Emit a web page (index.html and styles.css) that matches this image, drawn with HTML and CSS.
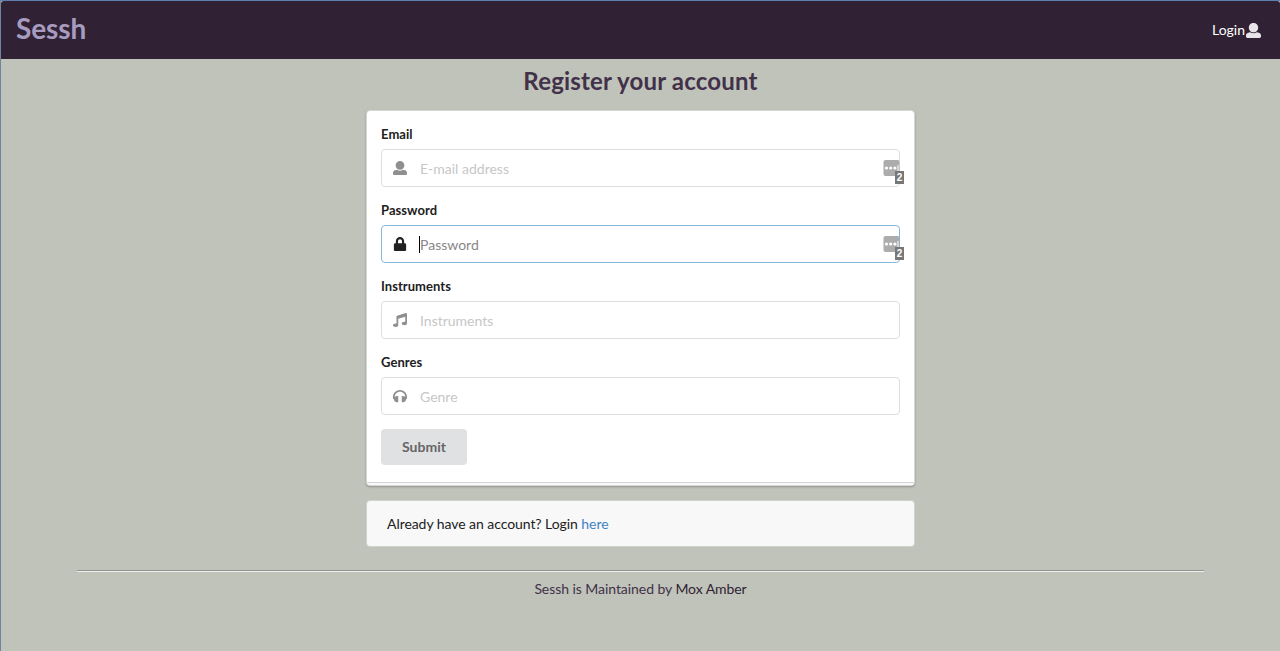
FILE: index.html
```html
<!DOCTYPE html>
<html lang="en">
<head>
<meta charset="utf-8">
<title>Sessh</title>
<link rel="stylesheet" href="styles.css">
</head>
<body>
<svg width="0" height="0" class="sprite">
  <symbol id="user" viewBox="0 0 512 512"><path d="M256 0c88.366 0 160 71.634 160 160s-71.634 160-160 160S96 248.366 96 160 167.634 0 256 0zm183.283 333.821l-71.313-17.828c-74.923 53.89-165.738 41.864-223.94 0l-71.313 17.828C29.981 344.505 0 382.903 0 426.955V464c0 26.51 21.49 48 48 48h416c26.51 0 48-21.49 48-48v-37.045c0-44.052-29.981-82.45-72.717-93.134z"/></symbol>
  <symbol id="lock" viewBox="0 0 448 512"><path d="M400 224h-24v-72C376 68.2 307.8 0 224 0S72 68.2 72 152v72H48c-26.5 0-48 21.5-48 48v192c0 26.5 21.5 48 48 48h352c26.5 0 48-21.5 48-48V272c0-26.5-21.5-48-48-48zm-104 0H152v-72c0-39.7 32.3-72 72-72s72 32.3 72 72v72z"/></symbol>
  <symbol id="music" viewBox="0 0 512 512"><path d="M511.99 32.01c0-21.71-21.1-37.01-41.6-30.51L150.4 96c-13.3 4.2-22.4 16.5-22.4 30.5v261.42c-10.05-2.38-20.72-3.92-32-3.92-53.02 0-96 28.65-96 64s42.98 64 96 64 96-28.65 96-64V214.31l256-75.02v184.63c-10.05-2.38-20.72-3.92-32-3.92-53.02 0-96 28.65-96 64s42.98 64 96 64 96-28.65 96-64l-.01-351.99z"/></symbol>
  <symbol id="headphones" viewBox="0 0 512 512"><path d="M256 32C114.52 32 0 146.497 0 288v48a32 32 0 0 0 17.689 28.622l14.383 7.191C34.083 431.903 83.421 480 144 480h24c13.255 0 24-10.745 24-24V280c0-13.255-10.745-24-24-24h-24c-31.342 0-59.671 12.879-80 33.627V288c0-105.869 86.131-192 192-192s192 86.131 192 192v1.627C427.671 268.879 399.342 256 368 256h-24c-13.255 0-24 10.745-24 24v176c0 13.255 10.745 24 24 24h24c60.579 0 109.917-48.098 111.928-108.187l14.382-7.191A32 32 0 0 0 512 336v-48c0-141.479-114.496-256-256-256z"/></symbol>
  <symbol id="manager" viewBox="0 0 16 16"><rect width="16" height="16" rx="2" fill="#acacac"/><g fill="#fff"><circle cx="3" cy="8" r="1.6"/><circle cx="7.2" cy="8" r="1.6"/><circle cx="11.4" cy="8" r="1.6"/><path d="M14 5h1v6h-1z"/></g></symbol>
</svg>
<header class="topbar">
  <a class="brand">Sessh</a>
  <a class="login">Login<svg class="icon"><use href="#user"/></svg></a>
</header>
<main class="page">
  <h2 class="title">Register your account</h2>
  <form class="card">
    <div class="field">
      <label class="label">Email</label>
      <div class="input"><svg class="icon"><use href="#user"/></svg><span class="hint">E-mail address</span>
        <span class="manager"><svg class="manager-icon"><use href="#manager"/></svg><b class="count">2</b></span></div>
    </div>
    <div class="field">
      <label class="label">Password</label>
      <div class="input focused"><svg class="icon"><use href="#lock"/></svg><i class="caret"></i><span class="hint">Password</span>
        <span class="manager"><svg class="manager-icon"><use href="#manager"/></svg><b class="count">2</b></span></div>
    </div>
    <div class="field">
      <label class="label">Instruments</label>
      <div class="input"><svg class="icon"><use href="#music"/></svg><span class="hint">Instruments</span></div>
    </div>
    <div class="field">
      <label class="label">Genres</label>
      <div class="input"><svg class="icon"><use href="#headphones"/></svg><span class="hint">Genre</span></div>
    </div>
    <button class="submit" type="button">Submit</button>
    <div class="stack"></div>
  </form>
  <div class="message">Already have an account? Login <a class="link">here</a></div>
</main>
<footer class="footer">Sessh is Maintained by <a class="author">Mox Amber</a></footer>
</body>
</html>
```

FILE: styles.css
```css
* { box-sizing: border-box; }
body {
  margin: 0;
  height: 651px;
  overflow: hidden;
  background: #c0c3b9;
  border-top: 1px solid #5f7fae;
  border-left: 1px solid #71859f;
  font: 14px/20px Lato, "Liberation Sans", sans-serif;
  color: #212121;
}
.sprite { position: absolute; }
.icon { width: 14px; height: 14px; fill: currentColor; flex: none; }
.topbar {
  height: 58px;
  padding: 0 19px 0 15px;
  display: flex;
  justify-content: space-between;
  align-items: center;
  background: #302234;
  border-radius: 3px 3px 0 0;
}
.brand { font-size: 28px; line-height: 36px; font-weight: 700; color: #a79cc0; padding-bottom: 5px; letter-spacing: -.1px; }
.login { display: flex; align-items: center; color: #fff; }
.login .icon { width: 15px; height: 15px; margin-left: 1px; color: #e8e4ea; }
.page { width: 549px; margin: 0 auto; }
.title { margin: 0; padding-top: 6px; height: 51px; font-size: 24px; line-height: 31px; font-weight: 700; letter-spacing: .18px; text-align: center; color: #42314a; }
.card {
  display: flex;
  flex-direction: column;
  height: 376px;
  padding: 14px 14px 0;
  background: #fff;
  border: 1px solid #d6d8d4;
  border-radius: 4px;
  box-shadow: 0 1px 2px rgba(34, 36, 38, .3);
}
.field { height: 76px; }
.label { display: block; height: 24px; line-height: 19px; font-size: 13px; font-weight: 700; letter-spacing: .05px; }
.input {
  display: flex;
  align-items: center;
  position: relative;
  height: 38px;
  padding-left: 11px;
  border: 1px solid #dededf;
  border-radius: 4px;
  color: #8f8f90;
}
.hint { margin-left: 13px; color: #c7c7c7; padding-top: 1px; }
.focused { border-color: #85b7d9; color: #212121; }
.focused .hint { margin-left: 0; color: #878787; }
.input .icon { margin-top: -1px; }
.caret { width: 1px; height: 17px; margin-left: 12px; background: #000; }
.manager { position: absolute; left: 501px; top: 10px; width: 21px; height: 24px; }
.manager-icon { display: block; width: 17px; height: 16px; }
.count { position: absolute; right: 0; bottom: 0; width: 9px; height: 13px; background: #777; color: #fff; font: bold 10px/13px "Liberation Sans", sans-serif; text-align: center; }
.submit { width: 86px; height: 36px; padding: 0; border: 0; border-radius: 4px; background: #e0e1e2; color: #666; font: 700 14px/14px Lato, sans-serif; }
.stack { height: 3px; margin: auto -14px 0; border-top: 1px solid #d4d4d5; background: #f8f8f8; border-radius: 0 0 4px 4px; }
.message { height: 47px; margin-top: 14px; padding: 13px 20px; background: #f8f8f9; border: 1px solid #d0d2ce; border-radius: 4px; line-height: 20px; letter-spacing: -.06px; }
.link { color: #4183c4; }
.footer { width: 1127px; margin: 23px auto 0; padding-top: 8px; border-top: 1px solid #8f9290; box-shadow: inset 0 1px #f0f1ef; text-align: center; color: #42314a; letter-spacing: -.06px; }
.author { color: #302234; }
```
